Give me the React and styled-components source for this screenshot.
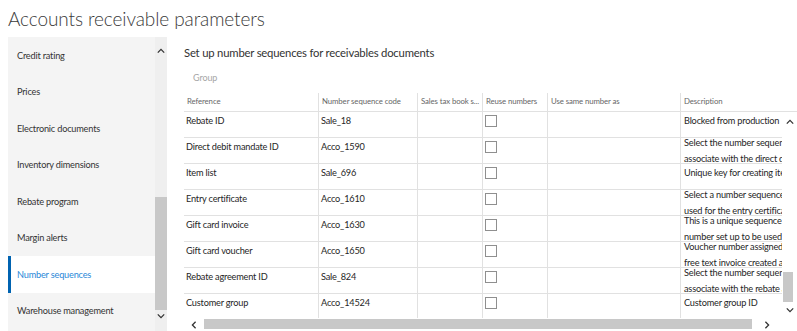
import React from 'react'
import styled, { createGlobalStyle } from 'styled-components'

const GlobalStyle = createGlobalStyle`
  html, body {
    margin: 0;
    padding: 0;
    background: #fff;
    overflow: hidden;
  }
  body {
    font-family: Lato, "Open Sans", sans-serif;
    color: #262626;
  }
`

const navItems = [
  'Credit rating',
  'Prices',
  'Electronic documents',
  'Inventory dimensions',
  'Rebate program',
  'Margin alerts',
  'Number sequences',
  'Warehouse management',
]

const columns = [
  { label: 'Reference', width: 134 },
  { label: 'Number sequence code', width: 99 },
  { label: 'Sales tax book s...', width: 65 },
  { label: 'Reuse numbers', width: 65 },
  { label: 'Use same number as', width: 133 },
  { label: 'Description', width: 102 },
]

const rows = [
  { ref: 'Rebate ID', code: 'Sale_18', desc: ['Blocked from production'] },
  { ref: 'Direct debit mandate ID', code: 'Acco_1590', desc: ['Select the number sequence to', 'associate with the direct debit mandate.'] },
  { ref: 'Item list', code: 'Sale_696', desc: ['Unique key for creating items'] },
  { ref: 'Entry certificate', code: 'Acco_1610', desc: ['Select a number sequence to be', 'used for the entry certificate.'] },
  { ref: 'Gift card invoice', code: 'Acco_1630', desc: ['This is a unique sequence', 'number set up to be used for'] },
  { ref: 'Gift card voucher', code: 'Acco_1650', desc: ['Voucher number assigned to', 'free text invoice created as'] },
  { ref: 'Rebate agreement ID', code: 'Sale_824', desc: ['Select the number sequence to', 'associate with the rebate agreement.'] },
  { ref: 'Customer group', code: 'Acco_14524', desc: ['Customer group ID'] },
]

function Chevron({ dir }) {
  const d = {
    up: 'M1 6 L5 2 L9 6',
    down: 'M1 2 L5 6 L9 2',
    left: 'M6 1 L2 5 L6 9',
    right: 'M2 1 L6 5 L2 9',
  }[dir]
  const vertical = dir === 'up' || dir === 'down'
  return (
    <svg width={vertical ? 10 : 8} height={vertical ? 8 : 10} viewBox={vertical ? '0 0 10 8' : '0 0 8 10'}>
      <path d={d} fill="none" stroke="#333" strokeWidth="1.6" />
    </svg>
  )
}

function App() {
  return (
    <Page>
      <GlobalStyle />
      <Title>Accounts receivable parameters</Title>
      <Body>
        <Nav>
          <NavList>
            {navItems.map((item) => (
              <NavItem key={item} $active={item === 'Number sequences'}>{item}</NavItem>
            ))}
          </NavList>
          <NavScroll>
            <ArrowBox $h={28}><Chevron dir="up" /></ArrowBox>
            <NavTrack>
              <NavThumb />
            </NavTrack>
            <ArrowBox $h={12}><Chevron dir="down" /></ArrowBox>
          </NavScroll>
        </Nav>

        <Content>
          <Heading>Set up number sequences for receivables documents</Heading>
          <Toolbar>
            <ToolButton>Group</ToolButton>
          </Toolbar>
          <Grid>
            <GridMain>
              <HeaderRow>
                {columns.map((c) => (
                  <HeaderCell key={c.label} $w={c.width}>{c.label}</HeaderCell>
                ))}
                <CornerCell />
              </HeaderRow>
              <BodyArea>
                <Rows>
                  {rows.map((r) => (
                    <Row key={r.ref}>
                      <Cell $w={134}>{r.ref}</Cell>
                      <Cell $w={99}>{r.code}</Cell>
                      <Cell $w={65} />
                      <Cell $w={65}><Check /></Cell>
                      <Cell $w={133} />
                      <DescCell $multi={r.desc.length > 1}>
                        {r.desc.map((l) => <DescLine key={l}>{l}</DescLine>)}
                      </DescCell>
                    </Row>
                  ))}
                </Rows>
                <VScroll>
                  <ArrowBox $h={16}><Chevron dir="up" /></ArrowBox>
                  <VTrack>
                    <VThumb />
                  </VTrack>
                  <ArrowBox $h={16}><Chevron dir="down" /></ArrowBox>
                </VScroll>
              </BodyArea>
            </GridMain>
            <HScroll>
              <HArrow><Chevron dir="left" /></HArrow>
              <HTrack>
                <HThumb />
              </HTrack>
              <HArrow><Chevron dir="right" /></HArrow>
              <HCorner />
            </HScroll>
          </Grid>
        </Content>
      </Body>
    </Page>
  )
}

const Page = styled.div`
  width: 797px;
  height: 331px;
  display: flex;
  flex-direction: column;
  overflow: hidden;
`

const Title = styled.h1`
  margin: 0;
  padding: 7px 0 0 8px;
  box-sizing: border-box;
  height: 37px;
  font-size: 19px;
  font-weight: 300;
  letter-spacing: -0.1px;
  color: #3a3a3a;
  white-space: nowrap;
`

const Body = styled.div`
  flex: 1;
  display: flex;
  min-height: 0;
`

const Nav = styled.div`
  margin-left: 8px;
  width: 159px;
  display: flex;
  background: #f4f4f4;
`

const NavList = styled.div`
  width: 147px;
  display: flex;
  flex-direction: column;
`

const NavItem = styled.div`
  height: 36.5px;
  flex-shrink: 0;
  display: flex;
  align-items: center;
  padding-left: 6px;
  box-sizing: border-box;
  font-size: 9.2px;
  letter-spacing: -0.2px;
  color: ${(p) => (p.$active ? '#2b88d8' : '#333')};
  background: ${(p) => (p.$active ? '#fff' : 'transparent')};
  border-left: 3px solid ${(p) => (p.$active ? '#0063b1' : 'transparent')};
  white-space: nowrap;
`

const NavScroll = styled.div`
  width: 12px;
  display: flex;
  flex-direction: column;
  padding-bottom: 9px;
  background: #efefef;
`

const ArrowBox = styled.div`
  height: ${(p) => p.$h}px;
  display: flex;
  align-items: center;
  justify-content: center;
  flex-shrink: 0;
  svg { width: 8px; }
`

const NavTrack = styled.div`
  flex: 1;
  display: flex;
  flex-direction: column;
  justify-content: flex-end;
`

const NavThumb = styled.div`
  height: 113px;
  background: #c8c8c8;
`

const Content = styled.div`
  flex: 1;
  display: flex;
  flex-direction: column;
  padding-left: 17px;
  min-width: 0;
`

const Heading = styled.h2`
  margin: 0;
  padding-top: 8px;
  height: 24px;
  box-sizing: border-box;
  font-size: 11.3px;
  letter-spacing: -0.2px;
  line-height: 16px;
  font-weight: 400;
  color: #333;
  white-space: nowrap;
`

const Toolbar = styled.div`
  height: 32px;
  display: flex;
  align-items: center;
`

const ToolButton = styled.span`
  padding-left: 9px;
  font-size: 9px;
  letter-spacing: -0.1px;
  color: #a6a6a6;
`

const Grid = styled.div`
  flex: 1;
  display: flex;
  flex-direction: column;
  min-height: 0;
`

const GridMain = styled.div`
  flex: 1;
  display: flex;
  flex-direction: column;
  min-height: 0;
`

const HeaderRow = styled.div`
  height: 18px;
  display: flex;
  border-bottom: 1px solid #e1e1e1;
  flex-shrink: 0;
`

const HeaderCell = styled.div`
  width: ${(p) => p.$w}px;
  flex-shrink: 0;
  box-sizing: border-box;
  padding: 3px 0 0 3px;
  font-size: 7.8px;
  letter-spacing: -0.1px;
  color: #666;
  white-space: nowrap;
  overflow: hidden;
  & + & { border-left: 1px solid #e1e1e1; }
`

const CornerCell = styled.div`
  flex: 1;
`

const BodyArea = styled.div`
  flex: 1;
  display: flex;
  min-height: 0;
`

const Rows = styled.div`
  flex: 1;
  display: flex;
  flex-direction: column;
  overflow: hidden;
  min-width: 0;
`

const Row = styled.div`
  height: 26px;
  flex-shrink: 0;
  display: flex;
  border-bottom: 1px solid #e1e1e1;
  box-sizing: border-box;
  overflow: hidden;
`

const Cell = styled.div`
  width: ${(p) => p.$w}px;
  flex-shrink: 0;
  box-sizing: border-box;
  padding: 1px 0 0 2px;
  line-height: 16px;
  font-size: 9.2px;
  letter-spacing: -0.2px;
  color: #262626;
  white-space: nowrap;
  & + & { border-left: 1px solid #e1e1e1; }
`

const DescCell = styled.div`
  flex: 1;
  min-width: 0;
  overflow: hidden;
  border-left: 1px solid #e1e1e1;
  padding: 1px 0 0 3px;
  font-size: 9.2px;
  letter-spacing: -0.2px;
  line-height: 16px;
  color: #262626;
  > div:first-child { margin-top: ${(p) => (p.$multi ? '-4px' : '0')}; }
`

const DescLine = styled.div`
  white-space: nowrap;
`

const Check = styled.div`
  width: 12px;
  height: 12px;
  margin-top: 2px;
  border: 1px solid #8f8f8f;
  box-sizing: border-box;
  background: #fff;
`

const VScroll = styled.div`
  width: 15px;
  flex-shrink: 0;
  display: flex;
  flex-direction: column;
  padding-top: 2px;
`

const VTrack = styled.div`
  flex: 1;
  display: flex;
  flex-direction: column;
  justify-content: flex-end;
  padding: 0 4px 0 1px;
`

const VThumb = styled.div`
  height: 30px;
  background: #c8c8c8;
`

const HScroll = styled.div`
  height: 13px;
  flex-shrink: 0;
  display: flex;
  align-items: stretch;
`

const HArrow = styled.div`
  width: 20px;
  display: flex;
  align-items: center;
  justify-content: center;
  flex-shrink: 0;
  svg { height: 8px; }
`

const HTrack = styled.div`
  flex: 1;
  display: flex;
  padding: 1px 0 2px 0;
`

const HThumb = styled.div`
  width: 548px;
  background: #c8c8c8;
`

const HCorner = styled.div`
  width: 20px;
  flex-shrink: 0;
`

export default App
